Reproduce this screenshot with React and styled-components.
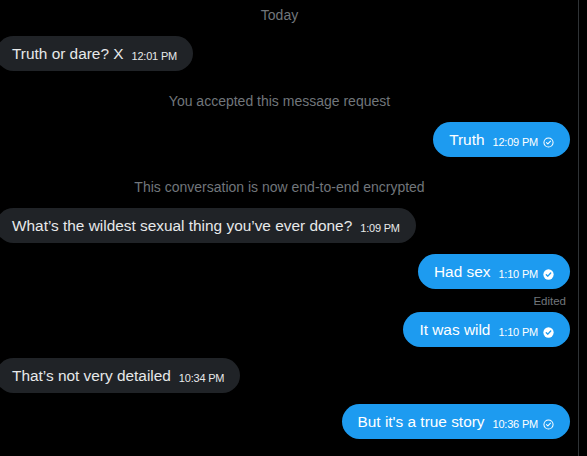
import styled, { createGlobalStyle } from "styled-components";

const GlobalStyle = createGlobalStyle`
  html, body {
    margin: 0;
    padding: 0;
    background: #000000;
  }
  body {
    font-family: "Liberation Sans", Arial, sans-serif;
    -webkit-font-smoothing: antialiased;
  }
`;

const messages = [
  { type: "system", text: "Today", first: true },
  { type: "in", text: "Truth or dare? X", time: "12:01 PM" },
  { type: "system", text: "You accepted this message request" },
  { type: "out", text: "Truth", time: "12:09 PM", status: "sent" },
  { type: "system", text: "This conversation is now end-to-end encrypted" },
  { type: "in", text: "What’s the wildest sexual thing you’ve ever done?", time: "1:09 PM" },
  { type: "out", text: "Had sex", time: "1:10 PM", status: "read" },
  { type: "edited", text: "Edited" },
  { type: "out", text: "It was wild", time: "1:10 PM", status: "read", tight: true },
  { type: "in", text: "That’s not very detailed", time: "10:34 PM" },
  { type: "out", text: "But it's a true story", time: "10:36 PM", status: "sent" },
];

function StatusIcon({ status }) {
  if (status === "read") {
    return (
      <Icon viewBox="0 0 12 12">
        <circle cx="6" cy="6" r="5.6" fill="#ffffff" />
        <path d="M3.6 6.2 L5.3 7.8 L8.4 4.4" fill="none" stroke="#1d9bf0" strokeWidth="1.5" strokeLinecap="round" strokeLinejoin="round" />
      </Icon>
    );
  }
  return (
    <Icon viewBox="0 0 12 12">
      <circle cx="6" cy="6" r="5" fill="none" stroke="#ffffff" strokeWidth="1.1" />
      <path d="M3.8 6.1 L5.3 7.6 L8.2 4.5" fill="none" stroke="#ffffff" strokeWidth="1.1" strokeLinecap="round" strokeLinejoin="round" />
    </Icon>
  );
}

export default function App() {
  return (
    <>
      <GlobalStyle />
      <Panel>
        <List>
          {messages.map((m, i) => {
            if (m.type === "system") {
              return (
                <SystemNote key={i} $first={m.first}>
                  {m.text}
                </SystemNote>
              );
            }
            if (m.type === "edited") {
              return <EditedNote key={i}>{m.text}</EditedNote>;
            }
            const out = m.type === "out";
            return (
              <Row key={i} $out={out} $tight={m.tight}>
                <Bubble $out={out}>
                  <span>{m.text}</span>
                  <Meta>
                    {m.time}
                    {out && <StatusIcon status={m.status} />}
                  </Meta>
                </Bubble>
              </Row>
            );
          })}
        </List>
      </Panel>
    </>
  );
}

const Panel = styled.div`
  width: 579px;
  height: 456px;
  box-sizing: border-box;
  border-right: 1px solid #2f3336;
  overflow: hidden;
  background: #000000;
`;

const List = styled.div`
  display: flex;
  flex-direction: column;
  margin-left: -4px;
  padding: 5px 8px 0 0;
`;

const SystemNote = styled.div`
  margin-top: ${(p) => (p.$first ? "0" : "20px")};
  padding-right: 7px;
  height: 20px;
  line-height: 20px;
  text-align: center;
  font-size: 14px;
  color: #71767b;
`;

const EditedNote = styled.div`
  margin-top: 6px;
  padding-right: 4px;
  height: 12px;
  line-height: 12px;
  text-align: right;
  font-size: 11.5px;
  color: #71767b;
`;

const Row = styled.div`
  display: flex;
  justify-content: ${(p) => (p.$out ? "flex-end" : "flex-start")};
  margin-top: ${(p) => (p.$tight ? "5px" : "11px")};
`;

const Bubble = styled.div`
  display: flex;
  align-items: baseline;
  gap: 8px;
  height: 35px;
  box-sizing: border-box;
  padding: 8px 16px 0;
  border-radius: 18px;
  background: ${(p) => (p.$out ? "#1d9bf0" : "#202327")};
  color: ${(p) => (p.$out ? "#ffffff" : "#e7e9ea")};
  font-size: 15.4px;
  line-height: 19px;
  white-space: nowrap;
`;

const Meta = styled.span`
  display: inline-flex;
  align-items: center;
  gap: 5px;
  position: relative;
  top: 1px;
  font-size: 11px;
  letter-spacing: -0.2px;
`;

const Icon = styled.svg`
  width: 11px;
  height: 11px;
  flex-shrink: 0;
`;
